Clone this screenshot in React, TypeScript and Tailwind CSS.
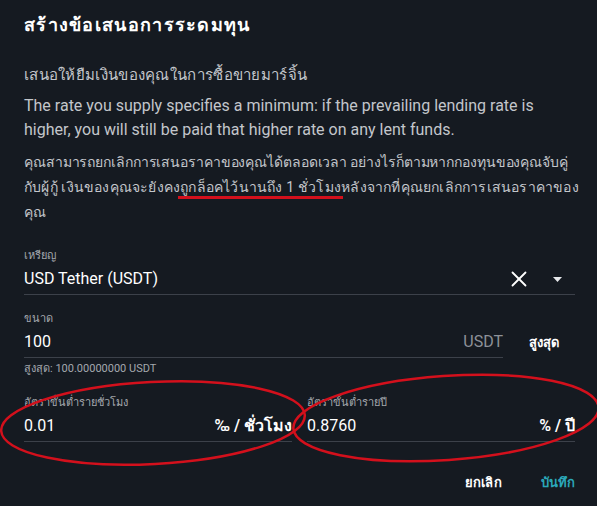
import React from 'react';
import { X } from 'lucide-react';

const font = "font-['Roboto','Noto_Sans','DejaVu_Sans',sans-serif]";

const Label: React.FC<{ children: React.ReactNode; className?: string }> = ({ children, className = '' }) => (
  <div className={`text-[11px] leading-[14px] text-[#a4a8ae] ${className}`}>{children}</div>
);

const App: React.FC = () => {
  return (
    <div className={`relative w-[597px] h-[506px] overflow-hidden bg-[#151a21] ${font}`}>
      <div className="flex flex-col pl-6 pr-[22px] pt-[13px]">
        <h2 className="text-[18px] leading-6 font-bold tracking-[1.3px] text-white">สร้างข้อเสนอการระดมทุน</h2>

        <p className="mt-[28px] text-[15px] leading-5 tracking-[0.3px] text-[#c3c6cb]">เสนอให้ยืมเงินของคุณในการซื้อขายมาร์จิ้น</p>

        <p className="mt-[9px] text-[16px] leading-6 text-[#c3c6cb]">
          The rate you supply specifies a minimum: if the prevailing lending rate is higher, you will still be paid that higher rate on any lent funds.
        </p>

        <p className="mt-[8px] text-[14px] leading-[25px] text-[#c3c6cb] whitespace-nowrap">
          <span className="block tracking-[-0.1px]">คุณสามารถยกเลิกการเสนอราคาของคุณได้ตลอดเวลา อย่างไรก็ตามหากกองทุนของคุณจับคู่</span>
          <span className="block tracking-[0.2px]">
            กับผู้กู้ เงินของคุณจะยังคง
            <span className="relative">
              ถูกล็อคไว้นานถึง 1 ชั่วโมง
              <span className="absolute left-[-2px] right-[-2px] bottom-[-4px] h-[3px] bg-[#d3101c]" />
            </span>
            หลังจากที่คุณยกเลิกการเสนอราคาของ
          </span>
          <span className="block">คุณ</span>
        </p>

        <Label className="mt-[24px]">เหรียญ</Label>
        <div className="mt-px flex h-[31px] items-center border-b border-[#3c414a] pr-[13px]">
          <span className="flex-1 text-[16px] text-white">USD Tether (USDT)</span>
          <X className="h-[26px] w-[26px] text-white" strokeWidth={1.7} />
          <svg className="ml-[21px]" width="9" height="5" viewBox="0 0 9 5">
            <path d="M0 0h9L4.5 5z" fill="#e8eaed" />
          </svg>
        </div>

        <Label className="mt-[17px]">ขนาด</Label>
        <div className="mt-px flex items-center">
          <div className="flex h-[31px] w-[479px] items-center border-b border-[#3c414a]">
            <span className="flex-1 text-[16px] text-white">100</span>
            <span className="text-[16px] text-[#8d9198]">USDT</span>
          </div>
          <button className="ml-[26px] text-[13px] font-bold text-white">สูงสุด</button>
        </div>
        <Label className="mt-[4px]">สูงสุด: 100.00000000 USDT</Label>

        <div className="mt-[20px] grid grid-cols-2 gap-[15px]">
          <div>
            <Label>อัตราขั้นต่ำรายชั่วโมง</Label>
            <div className="mt-px flex h-[31px] items-center border-b border-[#3c414a]">
              <span className="flex-1 text-[16px] text-white">0.01</span>
              <span className="text-[16px] font-semibold text-white">‰ / ชั่วโมง</span>
            </div>
          </div>
          <div>
            <Label>อัตราขั้นต่ำรายปี</Label>
            <div className="mt-px flex h-[31px] items-center border-b border-[#3c414a]">
              <span className="flex-1 text-[16px] text-white">0.8760</span>
              <span className="text-[16px] font-semibold text-white">% / ปี</span>
            </div>
          </div>
        </div>

        <div className="mt-[31px] flex items-center justify-end gap-[39px] text-[13px] font-bold leading-5">
          <button className="text-white tracking-[0.3px]">ยกเลิก</button>
          <button className="text-[#2ba7b9]">บันทึก</button>
        </div>
      </div>

      {/* red annotation ellipses drawn over the screenshot */}
      <svg className="pointer-events-none absolute inset-0" width="597" height="506" viewBox="0 0 597 506">
        <ellipse cx="153" cy="423" rx="152" ry="41" fill="none" stroke="#d3101c" strokeWidth="2.5" transform="rotate(-3 153 423)" />
        <ellipse cx="446" cy="418" rx="153" ry="42" fill="none" stroke="#d3101c" strokeWidth="2.5" transform="rotate(-4 446 418)" />
      </svg>
    </div>
  );
};

export default App;
